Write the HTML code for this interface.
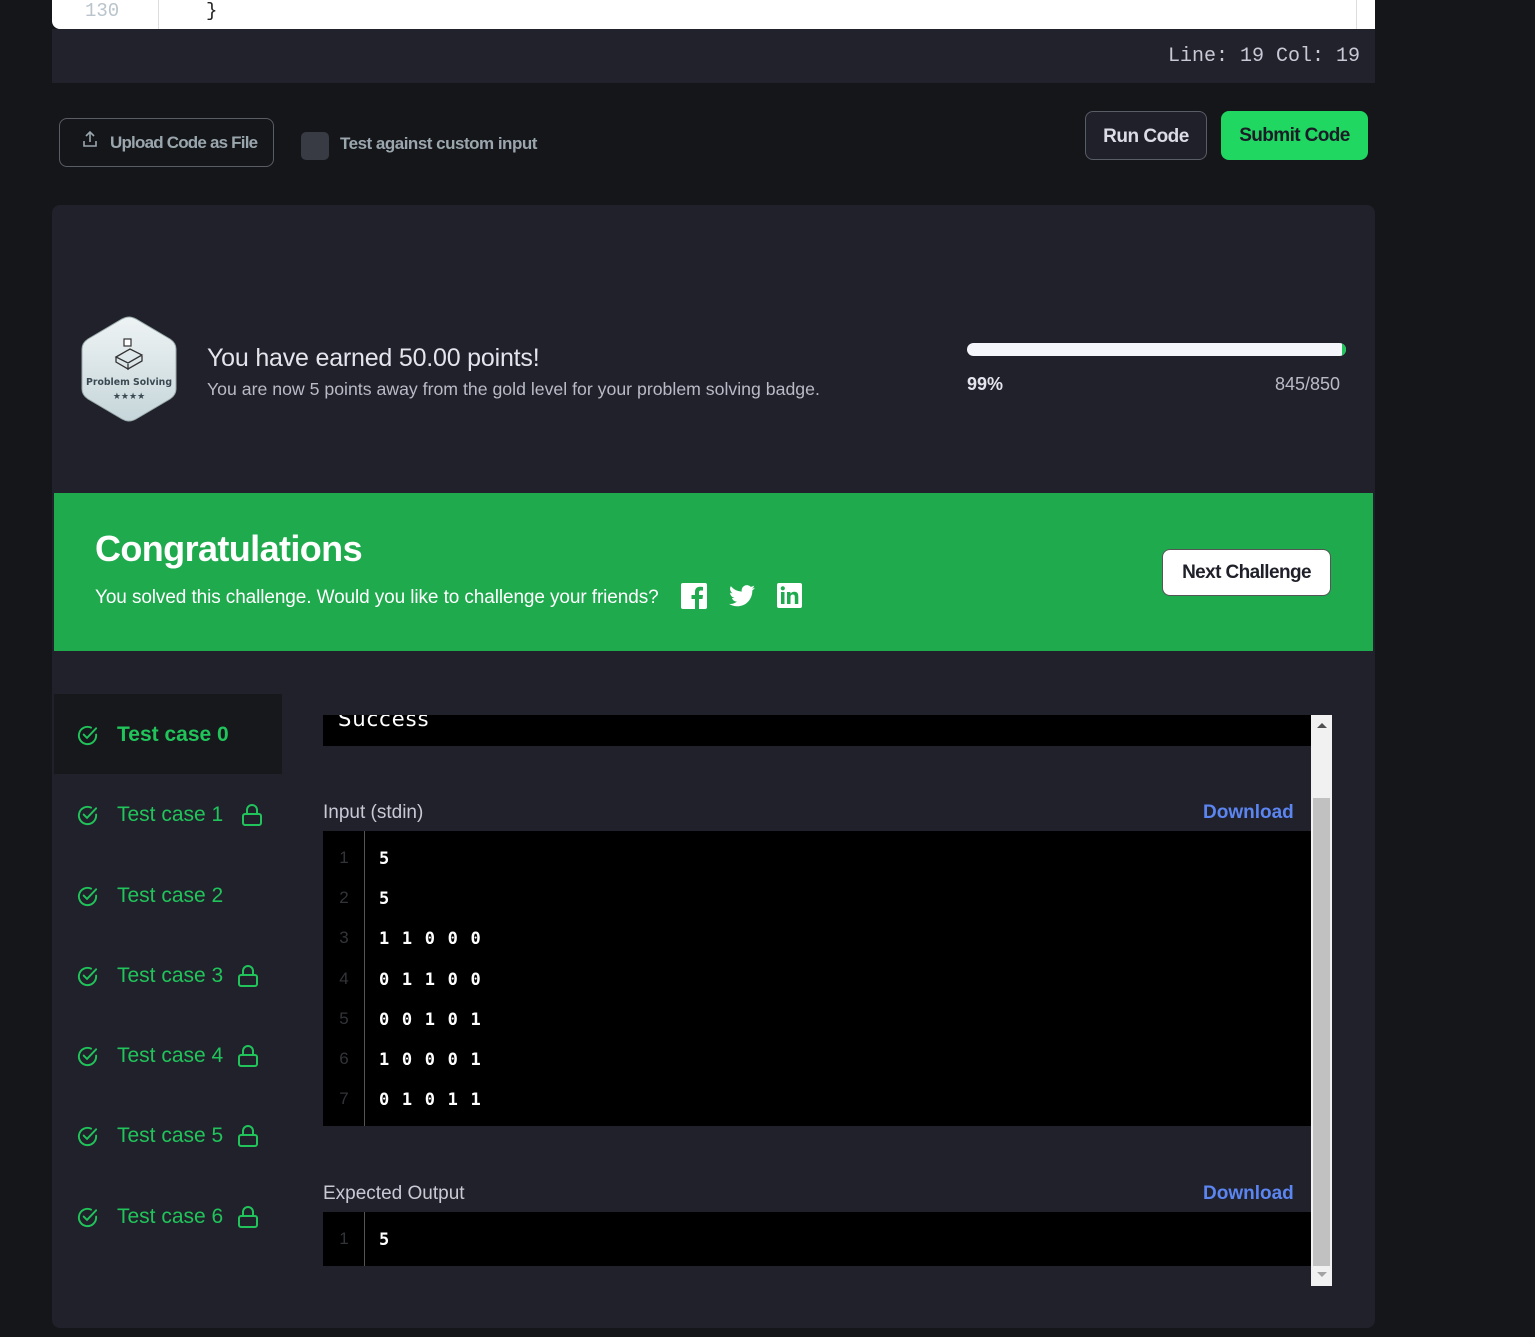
<!DOCTYPE html>
<html><head><meta charset="utf-8"><style>
*{margin:0;padding:0;box-sizing:border-box}
body{width:1535px;height:1337px;background:#15161a;font-family:"Liberation Sans",sans-serif;position:relative;overflow:hidden;color:#fff}
.a{position:absolute}
.mono{font-family:"Liberation Mono","DejaVu Sans Mono",monospace}
.tc{position:absolute;left:76px;color:#20c45a;font-size:21px;display:flex;align-items:center}
.tc svg{margin-right:18px}
.code{position:absolute;left:323px;width:988px;background:#000}
.ln{position:absolute;left:0;width:42px;text-align:center;color:#33343a;font-size:17px}
.lv{position:absolute;left:56px;color:#fff;font-weight:bold;font-size:17px;font-family:"DejaVu Sans Mono",monospace;letter-spacing:1.2px}
</style></head><body>
<div class="a" style="left:52px;top:0;width:1323px;height:29px;background:#fff;border-radius:0 0 0 8px"></div>
<div class="a" style="left:158px;top:0;width:1px;height:29px;background:#ddd"></div>
<div class="a" style="left:1356px;top:0;width:1px;height:29px;background:#ddd"></div>
<div class="a mono" style="left:85px;top:0;font-size:19px;color:#b9c4cc;line-height:22px">130</div>
<div class="a mono" style="left:206px;top:0;font-size:19px;color:#222;line-height:22px">}</div>
<div class="a" style="left:52px;top:29px;width:1323px;height:54px;background:#21222c"></div>
<div class="a mono" style="left:1168px;top:45px;font-size:20px;color:#c9c9d6">Line: 19 Col: 19</div>
<div class="a" style="left:59px;top:118px;width:215px;height:49px;border:1px solid #5a5c66;border-radius:8px"></div>
<svg class="a" style="left:82px;top:130px" width="16" height="18" viewBox="0 0 16 18" fill="none" stroke="#9aa6ad" stroke-width="1.6"><path d="M8 12V2M4 6l4-4 4 4M2 11v5h12v-5"/></svg>
<div class="a" style="left:110px;top:133px;font-size:17px;font-weight:bold;color:#9aa6ad;letter-spacing:-0.8px">Upload Code as File</div>
<div class="a" style="left:301px;top:132px;width:28px;height:28px;background:#383a44;border-radius:5px"></div>
<div class="a" style="left:340px;top:134px;font-size:17px;font-weight:bold;color:#9aa6ad;letter-spacing:-0.5px">Test against custom input</div>
<div class="a" style="left:1085px;top:111px;width:122px;height:49px;border:1px solid #5a5c66;border-radius:8px;background:#1f2029;text-align:center;line-height:49px;font-size:19px;font-weight:bold;color:#dcdce6;letter-spacing:-0.5px">Run Code</div>
<div class="a" style="left:1221px;top:111px;width:147px;height:49px;border-radius:8px;background:#20d761;text-align:center;line-height:50px;font-size:19px;font-weight:bold;color:#1a1c26;letter-spacing:-0.6px">Submit Code</div>
<div class="a" style="left:52px;top:205px;width:1323px;height:1123px;background:#21212b;border-radius:8px"></div>
<svg class="a" style="left:80px;top:315px" width="98" height="108" viewBox="0 0 98 108"><defs><linearGradient id="g" x1="0" y1="0" x2="0" y2="1"><stop offset="0" stop-color="#eef3f4"/><stop offset="1" stop-color="#c6d6da"/></linearGradient></defs><path d="M49 2 Q52 2 56 4 L90 24 Q96 28 96 34 L96 74 Q96 80 90 84 L56 104 Q49 108 42 104 L8 84 Q2 80 2 74 L2 34 Q2 28 8 24 L42 4 Q46 2 49 2Z" fill="url(#g)" stroke="#9aa" stroke-width="1"/><path d="M36 42 L50 34 L62 40 L48 48Z M36 42 v5 l12 7 v-5 M48 49 v5 l14 -8 v-5" fill="none" stroke="#333" stroke-width="1.3"/><rect x="44" y="24" width="7" height="7" fill="#fff" stroke="#333" stroke-width="1.2"/><text x="49" y="70" text-anchor="middle" font-family="DejaVu Sans" font-size="10" font-weight="bold" fill="#3b4a52" textLength="86" lengthAdjust="spacingAndGlyphs">Problem Solving</text><text x="49" y="84" text-anchor="middle" font-size="9" fill="#3b4a52">★★★★</text></svg>
<div class="a" style="left:207px;top:344px;font-size:25px;color:#e4e4ec;letter-spacing:-0.2px">You have earned 50.00 points!</div>
<div class="a" style="left:207px;top:379px;font-size:17.7px;color:#b9bac6">You are now 5 points away from the gold level for your problem solving badge.</div>
<div class="a" style="left:967px;top:343px;width:379px;height:13px;background:#f4f6fb;border-radius:7px;overflow:hidden"><div style="position:absolute;right:0;top:0;width:4px;height:13px;background:#20c45a"></div></div>
<div class="a" style="left:967px;top:374px;font-size:18px;font-weight:bold;color:#e4e4ec">99%</div>
<div class="a" style="left:1275px;top:374px;font-size:18px;color:#b9bac6">845/850</div>
<div class="a" style="left:54px;top:493px;width:1319px;height:158px;background:#1faa4e"></div>
<div class="a" style="left:95px;top:528px;font-size:36px;font-weight:bold;color:#fff;letter-spacing:-0.6px">Congratulations</div>
<div class="a" style="left:95px;top:587px;font-size:19px;color:#fff;letter-spacing:-0.1px">You solved this challenge. Would you like to challenge your friends?</div>
<svg class="a" style="left:681px;top:583px" width="26" height="26" viewBox="0 0 26 26"><rect width="26" height="26" rx="2" fill="#fff"/><path d="M18 26V16h3.5l.5-4h-4V9.5c0-1.2.4-2 2-2h2V4c-.4 0-1.6-.2-3-.2-3 0-5 1.8-5 5V12h-3.5v4H14v10z" fill="#1faa4e"/></svg>
<svg class="a" style="left:729px;top:585px" width="26" height="22" viewBox="0 0 24 20"><path d="M24 2.4a10 10 0 0 1-2.8.8A5 5 0 0 0 23.3.4a9.6 9.6 0 0 1-3.1 1.2A4.9 4.9 0 0 0 11.8 6 14 14 0 0 1 1.7.9a4.9 4.9 0 0 0 1.5 6.6 4.9 4.9 0 0 1-2.2-.6 4.9 4.9 0 0 0 3.9 4.8 5 5 0 0 1-2.2.1 4.9 4.9 0 0 0 4.6 3.4A9.9 9.9 0 0 1 0 17.3 14 14 0 0 0 7.5 19.5c9.1 0 14-7.5 14-14v-.6A10 10 0 0 0 24 2.4z" fill="#fff"/></svg>
<svg class="a" style="left:776px;top:582px" width="27" height="27" viewBox="0 0 27 27"><rect x="1" y="1" width="25" height="25" rx="2" fill="#fff"/><rect x="5" y="10" width="3.5" height="12" fill="#1faa4e"/><circle cx="6.8" cy="6.3" r="2.1" fill="#1faa4e"/><path d="M11 10h3.4v1.7c.6-1.1 2-2 3.9-2 3.4 0 4 2.2 4 5V22h-3.5v-6.3c0-1.5 0-3.2-2-3.2s-2.3 1.5-2.3 3.1V22H11z" fill="#1faa4e"/></svg>
<div class="a" style="left:1162px;top:549px;width:169px;height:47px;background:#fff;border:1px solid #555;border-radius:8px;text-align:center;line-height:46px;font-size:19px;font-weight:bold;color:#1f2029;letter-spacing:-0.6px">Next Challenge</div>
<div class="a" style="left:54px;top:694px;width:228px;height:80px;background:#17181c"></div>
<div class="tc" style="top:723px;font-weight:bold"><svg width="23" height="23" viewBox="0 0 24 24" fill="none" stroke="#20c45a" stroke-width="2" stroke-linecap="round"><path d="M21 11v1a9 9 0 1 1-5.3-8.2"/><path d="M8 11l3.5 3.5L21 4.5"/></svg>Test case 0</div>
<div class="tc" style="top:803px"><svg width="23" height="23" viewBox="0 0 24 24" fill="none" stroke="#20c45a" stroke-width="2" stroke-linecap="round"><path d="M21 11v1a9 9 0 1 1-5.3-8.2"/><path d="M8 11l3.5 3.5L21 4.5"/></svg>Test case 1<svg style="margin-left:18px" width="22" height="24" viewBox="0 0 22 24" fill="none" stroke="#20c45a" stroke-width="2"><rect x="2" y="11" width="18" height="11" rx="2"/><path d="M6 11V7a5 5 0 0 1 10 0v4"/></svg></div>
<div class="tc" style="top:884px"><svg width="23" height="23" viewBox="0 0 24 24" fill="none" stroke="#20c45a" stroke-width="2" stroke-linecap="round"><path d="M21 11v1a9 9 0 1 1-5.3-8.2"/><path d="M8 11l3.5 3.5L21 4.5"/></svg>Test case 2</div>
<div class="tc" style="top:964px"><svg width="23" height="23" viewBox="0 0 24 24" fill="none" stroke="#20c45a" stroke-width="2" stroke-linecap="round"><path d="M21 11v1a9 9 0 1 1-5.3-8.2"/><path d="M8 11l3.5 3.5L21 4.5"/></svg>Test case 3<svg style="margin-left:14px" width="22" height="24" viewBox="0 0 22 24" fill="none" stroke="#20c45a" stroke-width="2"><rect x="2" y="11" width="18" height="11" rx="2"/><path d="M6 11V7a5 5 0 0 1 10 0v4"/></svg></div>
<div class="tc" style="top:1044px"><svg width="23" height="23" viewBox="0 0 24 24" fill="none" stroke="#20c45a" stroke-width="2" stroke-linecap="round"><path d="M21 11v1a9 9 0 1 1-5.3-8.2"/><path d="M8 11l3.5 3.5L21 4.5"/></svg>Test case 4<svg style="margin-left:14px" width="22" height="24" viewBox="0 0 22 24" fill="none" stroke="#20c45a" stroke-width="2"><rect x="2" y="11" width="18" height="11" rx="2"/><path d="M6 11V7a5 5 0 0 1 10 0v4"/></svg></div>
<div class="tc" style="top:1124px"><svg width="23" height="23" viewBox="0 0 24 24" fill="none" stroke="#20c45a" stroke-width="2" stroke-linecap="round"><path d="M21 11v1a9 9 0 1 1-5.3-8.2"/><path d="M8 11l3.5 3.5L21 4.5"/></svg>Test case 5<svg style="margin-left:14px" width="22" height="24" viewBox="0 0 22 24" fill="none" stroke="#20c45a" stroke-width="2"><rect x="2" y="11" width="18" height="11" rx="2"/><path d="M6 11V7a5 5 0 0 1 10 0v4"/></svg></div>
<div class="tc" style="top:1205px"><svg width="23" height="23" viewBox="0 0 24 24" fill="none" stroke="#20c45a" stroke-width="2" stroke-linecap="round"><path d="M21 11v1a9 9 0 1 1-5.3-8.2"/><path d="M8 11l3.5 3.5L21 4.5"/></svg>Test case 6<svg style="margin-left:14px" width="22" height="24" viewBox="0 0 22 24" fill="none" stroke="#20c45a" stroke-width="2"><rect x="2" y="11" width="18" height="11" rx="2"/><path d="M6 11V7a5 5 0 0 1 10 0v4"/></svg></div>
<div class="code" style="top:715px;height:31px;overflow:hidden"><div style="position:absolute;left:15px;top:-8px;font-family:'DejaVu Sans',sans-serif;font-size:21px;color:#fff;letter-spacing:1px">Success</div></div>
<div class="a" style="left:323px;top:802px;font-size:19px;color:#c9c9d6">Input (stdin)</div>
<div class="a" style="left:1203px;top:802px;font-size:19px;font-weight:bold;color:#5b85f0">Download</div>
<div class="code" style="top:831px;height:295px">
<div style="position:absolute;left:41px;top:0;width:1px;height:295px;background:#555"></div>
<div class="ln" style="top:17px">1</div><div class="lv" style="top:18px">5</div>
<div class="ln" style="top:57px">2</div><div class="lv" style="top:58px">5</div>
<div class="ln" style="top:97px">3</div><div class="lv" style="top:98px">1 1 0 0 0</div>
<div class="ln" style="top:138px">4</div><div class="lv" style="top:139px">0 1 1 0 0</div>
<div class="ln" style="top:178px">5</div><div class="lv" style="top:179px">0 0 1 0 1</div>
<div class="ln" style="top:218px">6</div><div class="lv" style="top:219px">1 0 0 0 1</div>
<div class="ln" style="top:258px">7</div><div class="lv" style="top:259px">0 1 0 1 1</div>
</div>
<div class="a" style="left:323px;top:1183px;font-size:19px;color:#c9c9d6">Expected Output</div>
<div class="a" style="left:1203px;top:1183px;font-size:19px;font-weight:bold;color:#5b85f0">Download</div>
<div class="code" style="top:1212px;height:54px">
<div style="position:absolute;left:41px;top:0;width:1px;height:54px;background:#555"></div>
<div class="ln" style="top:17px">1</div><div class="lv" style="top:18px">5</div>
</div>
<div class="a" style="left:1311px;top:715px;width:21px;height:571px;background:#f1f1f1"></div>
<div class="a" style="left:1313px;top:798px;width:17px;height:468px;background:#c1c1c1"></div>
<div class="a" style="left:1317px;top:723px;width:0;height:0;border-left:5px solid transparent;border-right:5px solid transparent;border-bottom:5px solid #505050"></div>
<div class="a" style="left:1317px;top:1272px;width:0;height:0;border-left:5px solid transparent;border-right:5px solid transparent;border-top:5px solid #a3a3a3"></div>
</body></html>
